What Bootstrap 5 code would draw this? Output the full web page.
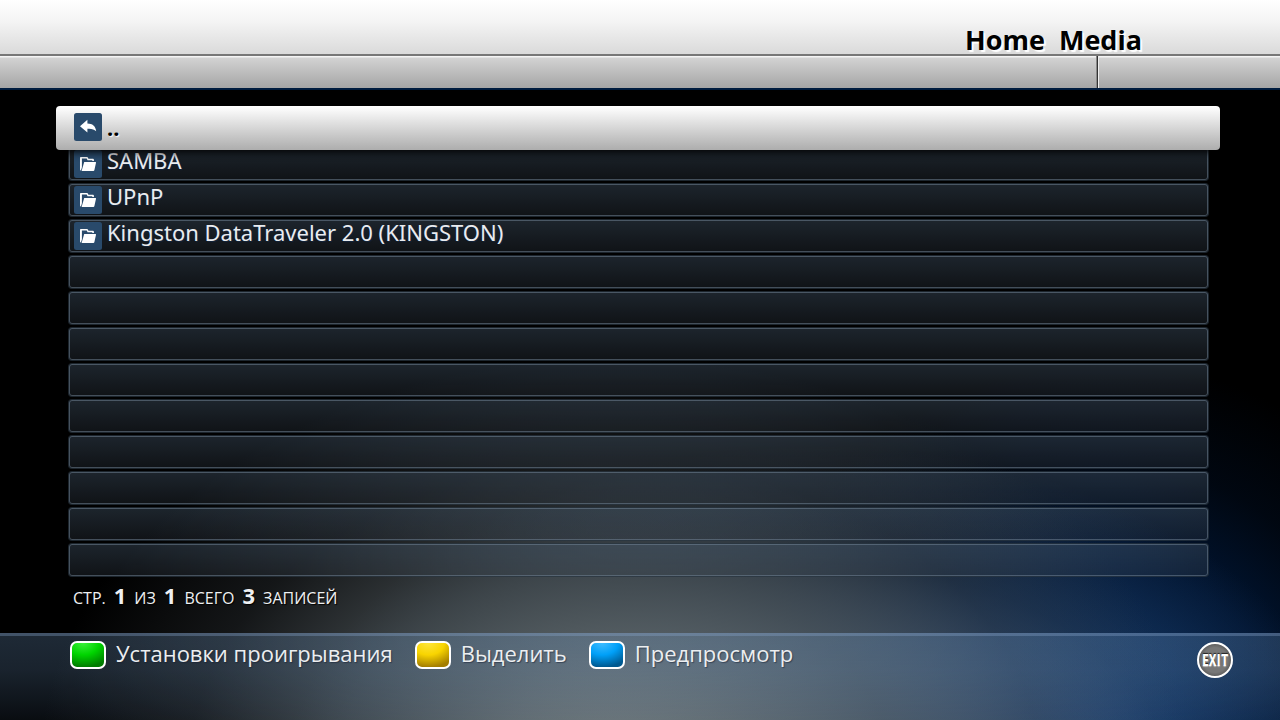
<!DOCTYPE html>
<html lang="ru">
<head>
<meta charset="utf-8">
<meta name="viewport" content="width=device-width, initial-scale=1">
<title>Home Media</title>
<link rel="stylesheet" href="https://cdn.jsdelivr.net/npm/bootstrap@5.3.0/dist/css/bootstrap.min.css">
<style>
  body {
    font-family: "Noto Sans", "Open Sans", sans-serif;
    font-size: 22px;
    line-height: 28px;
    color: #eef0f2;
    background:
      radial-gradient(ellipse 45% 58% at 48% 107%, rgba(114,122,122,1) 0%, rgba(98,106,108,.94) 22%, rgba(74,82,86,.8) 48%, rgba(48,53,57,.42) 74%, transparent 100%),
      radial-gradient(ellipse 42% 48% at 64% 110%, rgba(86,126,170,1) 0%, rgba(66,100,144,.85) 35%, rgba(42,76,118,.45) 66%, transparent 100%),
      radial-gradient(ellipse 30% 56% at 86% 106%, rgba(8,50,110,1) 0%, rgba(2,34,78,.9) 25%, rgba(1,26,62,.8) 50%, rgba(1,14,34,.5) 75%, transparent 100%),
      #000;
  }
  .title-bar {
    height: 56px;
    padding: 0 138px 0 0;
    background: linear-gradient(#fff, #f4f4f4 40%, #dadada);
    border-bottom: 2px solid #777;
  }
  .title-bar h1 {
    font-family: "Open Sans", sans-serif;
    font-size: 27px;
    line-height: 28px;
    color: #000;
    text-shadow: 2px 2px 1px #fff;
  }
  .sub-bar {
    height: 34px;
    background: linear-gradient(#f4f4f4 0, #f4f4f4 1px, #d2d2d2 2px, #a5a5a5);
    border-bottom: 2px solid #001c3e;
  }
  .sub-bar-end {
    width: 183px;
    border-left: 1px solid #333;
    box-shadow: inset 1px 0 #eee, -1px 0 #888;
  }
  .file-list {
    padding: 16px 71px 0 68px;
  }
  .file-row {
    height: 34px;
    margin-bottom: 2px;
    padding: 0 4px;
    border: 1px solid rgba(40,52,64,.7);
    border-radius: 4px;
    box-shadow: inset 0 0 0 1px rgba(112,130,148,.55);
    background: linear-gradient(rgba(72,92,112,.4), rgba(52,62,74,.3)) padding-box;
  }
  .file-row a {
    color: #e9ecf0;
    text-shadow: 1px 1px 1px #12243c;
  }
  .file-row svg { margin: -1px 0 0 1px; }
  .file-name {
    margin-top: -8px;
    padding-left: 5px;
  }
  .file-row.current {
    position: relative;
    z-index: 1;
    height: 44px;
    margin: 0 -11px -3px -12px;
    padding: 0 17px;
    border: 0;
    border-radius: 4px;
    background: linear-gradient(#fff, #f6f6f6 12%, #adadad);
    box-shadow: 0 2px 8px #000;
  }
  .file-row.current a { color: #000; text-shadow: 1px 1px 1px #fff; }
  .file-row.current svg { margin-top: -2px; }
  .file-row.current .file-name { margin-top: -2px; }
  .page-status {
    padding: 2px 72px 0 73px;
    font-size: 16px;
    gap: 8px;
    text-shadow: 1px 1px 1px #000;
  }
  .page-status b { font-size: 22px; }
  .page-status span { font-family: "Open Sans", sans-serif; }
  .key-bar {
    min-height: 87px;
    padding: 0 47px 0 70px;
    border-top: 3px solid rgba(134,166,206,.46);
    background: linear-gradient(rgba(116,160,208,.26), rgba(116,160,208,.22) 40%, rgba(116,160,216,.08));
  }
  .key-list { column-gap: 22px; }
  .key-btn {
    gap: 10px;
    padding: 5px 0;
    border: 0;
    background: none;
    color: #eceef0;
    font-family: "Open Sans", sans-serif;
    text-shadow: 1px 1px 1px rgba(20,30,50,.5);
  }
  .key-label { margin-top: -4px; }
  .key-cap {
    width: 36px;
    height: 28px;
    border: 2px solid #fff;
    border-radius: 7px;
  }
  .key-green { background: radial-gradient(ellipse 100% 100% at 35% 0, #3af03a, #00d400 50%, #007c00 100%); }
  .key-yellow { background: radial-gradient(ellipse 100% 100% at 35% 0, #ffe63a, #f8d400 50%, #a47e00 100%); }
  .key-blue { background: radial-gradient(ellipse 100% 100% at 35% 0, #40bcff, #00a0f8 50%, #005990 100%); }
  .exit-btn {
    width: 36px;
    height: 36px;
    margin-top: 6px;
    border: 2px solid #fff;
    background: radial-gradient(circle, #777 55%, #333);
    color: #fff;
    font-family: "Open Sans Condensed", "Open Sans", sans-serif;
    font-size: 16px;
    font-weight: 700;
    line-height: 30px;
    text-shadow: 0 -1px 1px #222, 0 1px 1px #bbb;
  }
</style>
</head>
<body class="min-vh-100 d-flex flex-column">
<svg class="d-none" aria-hidden="true">
  <symbol id="icon-folder" viewBox="0 0 28 28">
    <rect width="28" height="28" rx="2.5" fill="#294a6b"/>
    <path fill="#fff" d="M6 7.8q0-.8.8-.8h6.2q.7 0 1 .8l.4.9h4.6q.9 0 .9 1v1.2h-1.6v-.6H13.6l-.9-1.8H7.9v8.7l-.9 3.2q-1-.2-1-1z"/>
    <path fill="#fff" d="M10.2 11.9h11.3q.7 0 .5.8l-1.6 7.4q-.2.9-1.1.9H7.6z"/>
  </symbol>
  <symbol id="icon-back" viewBox="0 0 28 28">
    <rect width="28" height="28" rx="2.5" fill="#294a6b"/>
    <path fill="#fff" d="M6 13.2 13.4 6.8v3.6c5 .1 8.3 2.5 8.8 7.9-2-2.2-4.9-2.9-8.8-2.6v3.7z"/>
  </symbol>
</svg>

<header>
  <div class="title-bar d-flex justify-content-end align-items-end">
    <h1 class="fw-bold mb-0">Home&nbsp; Media</h1>
  </div>
  <div class="sub-bar d-flex justify-content-end"><div class="sub-bar-end"></div></div>
</header>

<main class="flex-grow-1">
  <ul class="file-list list-unstyled mb-0">
    <li class="file-row current"><a href="#" class="d-flex align-items-center h-100 text-decoration-none"><svg width="28" height="28" aria-hidden="true"><use href="#icon-back"/></svg><span class="file-name fw-bold">..</span></a></li>
    <li class="file-row"><a href="#" class="d-flex align-items-center h-100 text-decoration-none"><svg width="28" height="28" aria-hidden="true"><use href="#icon-folder"/></svg><span class="file-name">SAMBA</span></a></li>
    <li class="file-row"><a href="#" class="d-flex align-items-center h-100 text-decoration-none"><svg width="28" height="28" aria-hidden="true"><use href="#icon-folder"/></svg><span class="file-name">UPnP</span></a></li>
    <li class="file-row"><a href="#" class="d-flex align-items-center h-100 text-decoration-none"><svg width="28" height="28" aria-hidden="true"><use href="#icon-folder"/></svg><span class="file-name">Kingston DataTraveler 2.0 (KINGSTON)</span></a></li>
    <li class="file-row"></li>
    <li class="file-row"></li>
    <li class="file-row"></li>
    <li class="file-row"></li>
    <li class="file-row"></li>
    <li class="file-row"></li>
    <li class="file-row"></li>
    <li class="file-row"></li>
    <li class="file-row"></li>
  </ul>
  <p class="page-status d-flex align-items-baseline mb-0">
    <span>СТР.</span><b>1</b><span>ИЗ</span><b>1</b><span>ВСЕГО</span><b>3</b><span>ЗАПИСЕЙ</span>
  </p>
</main>

<footer class="key-bar d-flex justify-content-between align-items-start">
  <div class="key-list d-flex flex-wrap">
    <button type="button" class="key-btn d-flex align-items-center"><span class="key-cap key-green"></span><span class="key-label">Установки проигрывания</span></button>
    <button type="button" class="key-btn d-flex align-items-center"><span class="key-cap key-yellow"></span><span class="key-label">Выделить</span></button>
    <button type="button" class="key-btn d-flex align-items-center"><span class="key-cap key-blue"></span><span class="key-label">Предпросмотр</span></button>
  </div>
  <button type="button" class="exit-btn rounded-circle p-0">EXIT</button>
</footer>
<script src="https://cdn.jsdelivr.net/npm/bootstrap@5.3.0/dist/js/bootstrap.bundle.min.js"></script>
</body>
</html>
